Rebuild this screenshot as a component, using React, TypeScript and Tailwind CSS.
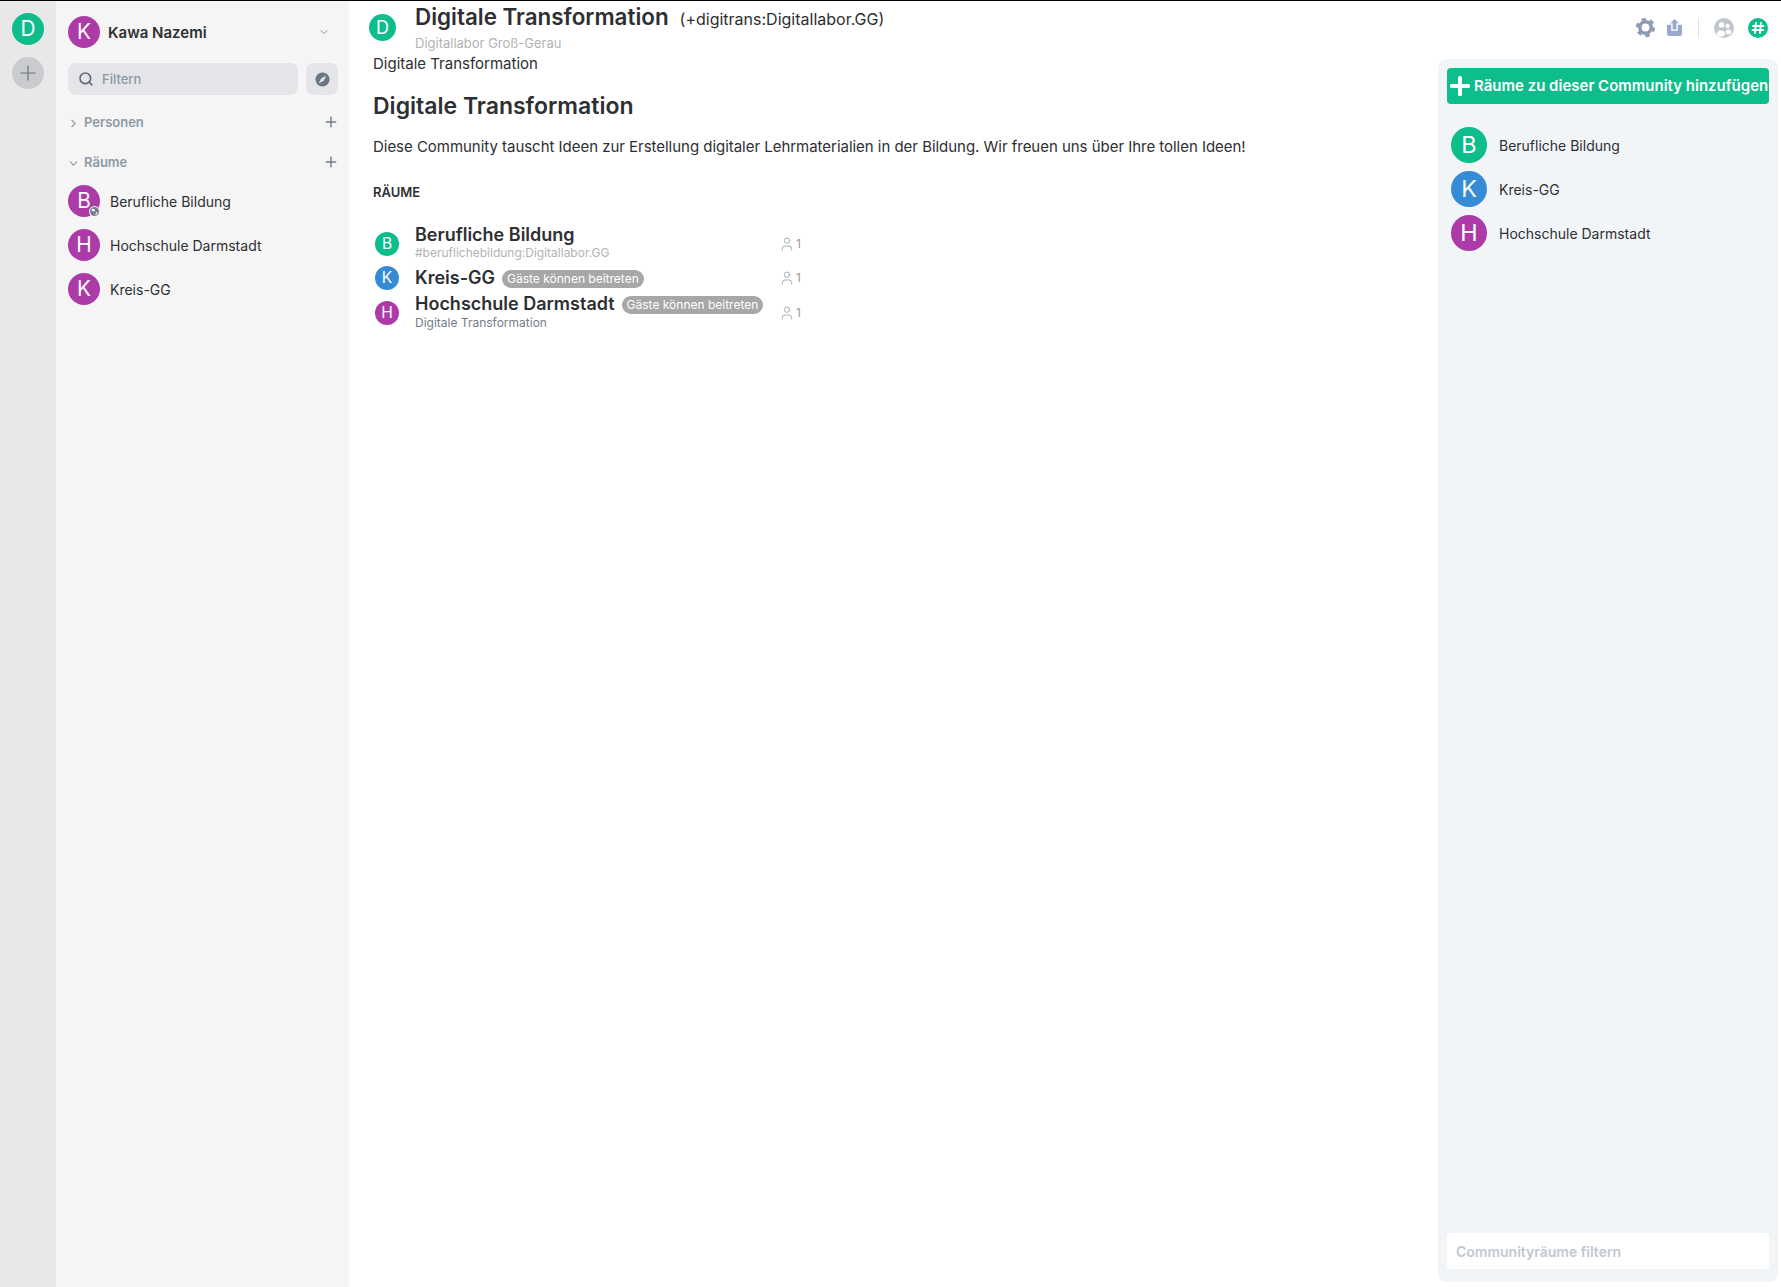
import { ChevronDown, ChevronRight, Plus, Search, User } from "lucide-react";
import { PropsWithChildren } from "react";

const GREEN = "bg-[#0dbd8b]";
const BLUE = "bg-[#368bd6]";
const PURPLE = "bg-[#ac3ba8]";

function Avatar({ letter, color, className }: { letter: string; color: string; className: string }) {
  return (
    <div className={`flex shrink-0 items-center justify-center rounded-full text-white ${color} ${className}`}>
      {letter}
    </div>
  );
}

function SectionHeader({ label, open }: { label: string; open?: boolean }) {
  return (
    <div className="flex h-5 items-center pl-[11px] pr-[10px]">
      {open ? (
        <ChevronDown size={13} strokeWidth={2} className="text-[#8d99a5]" />
      ) : (
        <ChevronRight size={13} strokeWidth={2} className="text-[#8d99a5]" />
      )}
      <span className="ml-[4px] text-[13px] font-semibold text-[#8d99a5]">{label}</span>
      <Plus size={16} strokeWidth={2.2} className="ml-auto -mt-[2px] text-[#737d8c]" />
    </div>
  );
}

function RoomRow({ letter, name, globe }: { letter: string; name: string; globe?: boolean }) {
  return (
    <div className="flex h-[32px] items-center pl-[12px]">
      <div className="relative">
        <Avatar letter={letter} color={PURPLE} className="h-8 w-8 text-[20.8px]" />
        {globe && (
          <div className="absolute bottom-0 right-0 flex h-[11px] w-[11px] items-center justify-center rounded-full bg-[#f5f5f5]">
            <svg viewBox="0 0 12 12" className="h-[9px] w-[9px]">
              <circle cx="6" cy="6" r="6" fill="#737d8c" />
              <path d="M3 2l3 1 1 2-2 1-3-1zM8 7l2 0-1 3-2 1z" fill="#f5f5f5" />
            </svg>
          </div>
        )}
      </div>
      <span className="ml-[10px] text-[14px] text-[#2e2f32]">{name}</span>
    </div>
  );
}

function LeftPanel() {
  return (
    <div className="w-[293px] shrink-0 bg-[#f5f5f5] pt-[15px]">
      <div className="flex h-8 items-center pl-[12px] pr-[19px]">
        <Avatar letter="K" color={PURPLE} className="h-8 w-8 text-[20.8px]" />
        <span className="ml-2 pt-[2px] text-[15px] font-semibold text-[#2e2f32]">Kawa Nazemi</span>
        <ChevronDown size={12} strokeWidth={2} className="ml-auto text-[#8d99a5]" />
      </div>
      <div className="mt-[15px] flex gap-2 pl-[12px] pr-[11px]">
        <div className="flex h-8 flex-1 items-center rounded-lg bg-[#e3e5e8] pl-[10px]">
          <Search size={16} strokeWidth={2.4} className="text-[#5e6976]" />
          <span className="ml-[8px] pt-[2px] text-[13px] font-medium text-[#8d99a5]">Filtern</span>
        </div>
        <div className="flex h-8 w-8 items-center justify-center rounded-lg bg-[#e3e5e8]">
          <svg viewBox="0 0 16 16" className="h-[15px] w-[15px]">
            <circle cx="8" cy="8" r="7.5" fill="#6b7788" />
            <path d="M12 4L9.300 9.300 4 12 6.700 6.700z" fill="#e3e5e8" />
          </svg>
        </div>
      </div>
      <div className="mt-[18px]">
        <SectionHeader label="Personen" />
      </div>
      <div className="mt-[20px]">
        <SectionHeader label="Räume" open />
      </div>
      <div className="mt-[12px] flex flex-col gap-3">
        <RoomRow letter="B" name="Berufliche Bildung" globe />
        <RoomRow letter="H" name="Hochschule Darmstadt" />
        <RoomRow letter="K" name="Kreis-GG" />
      </div>
    </div>
  );
}

function Badge({ children }: PropsWithChildren) {
  return (
    <span className="ml-[7px] mt-[1px] rounded-full bg-[#a7a7a7] px-[5px] py-[1px] text-[12px] leading-4 whitespace-nowrap text-white">
      {children}
    </span>
  );
}

function Members() {
  return (
    <div className="flex items-center text-[12px] text-[#9a9a9a]">
      <User size={16} strokeWidth={1.2} className="text-[#8d99a5]" />
      <span className="ml-[1px]">1</span>
    </div>
  );
}

function HierarchyRow({
  letter,
  color,
  name,
  badge,
  sub,
  subClass,
  className,
}: {
  letter: string;
  color: string;
  name: string;
  badge?: boolean;
  sub?: string;
  subClass?: string;
  className: string;
}) {
  return (
    <div className={`grid grid-cols-[42px_364px_auto] items-center ${className}`}>
      <Avatar letter={letter} color={color} className="ml-[2px] h-6 w-6 text-[15.6px]" />
      <div>
        <div className="flex items-center">
          <span className="text-[18px] font-semibold leading-[22px] whitespace-nowrap text-[#2e2f32]">{name}</span>
          {badge && <Badge>Gäste können beitreten</Badge>}
        </div>
        {sub && <div className={`text-[12px] leading-4 ${subClass}`}>{sub}</div>}
      </div>
      <Members />
    </div>
  );
}

function Main() {
  return (
    <div className="min-w-0 flex-1 pl-[24px]">
      <div className="-mt-[1px] text-[15px] leading-5 text-[#2e2f32]">Digitale Transformation</div>
      <h1 className="mt-[18px] text-[23px] font-semibold leading-[29px] text-[#2e2f32]">Digitale Transformation</h1>
      <p className="mt-[16px] text-[15px] leading-5 tracking-[-0.03px] text-[#2e2f32]">
        Diese Community tauscht Ideen zur Erstellung digitaler Lehrmaterialien in der Bildung. Wir freuen uns über Ihre
        tollen Ideen!
      </p>
      <div className="mt-[27px] text-[13px] font-semibold leading-4 text-[#2e2f32]">RÄUME</div>
      <div className="mt-[24px]">
        <HierarchyRow
          letter="B"
          color={GREEN}
          name="Berufliche Bildung"
          sub="#beruflichebildung:Digitallabor.GG"
          subClass="-mt-[1px] pb-[3px] text-[#b3b3b3]"
          className="h-[38px]"
        />
        <HierarchyRow letter="K" color={BLUE} name="Kreis-GG" badge className="mt-[3px] h-[26px]" />
        <HierarchyRow
          letter="H"
          color={PURPLE}
          name="Hochschule Darmstadt"
          badge
          sub="Digitale Transformation"
          subClass="pb-[2px] text-[#737d8c]"
          className="mt-[1px] h-[42px]"
        />
      </div>
    </div>
  );
}

function Header() {
  return (
    <div className="flex h-[54px] shrink-0">
      <div className="flex flex-1">
        <Avatar letter="D" color={GREEN} className="ml-[20px] mt-[13px] h-[27px] w-[27px] text-[18px]" />
        <div className="ml-[19px] pt-[1px]">
          <div className="flex items-baseline">
            <span className="text-[22.4px] font-semibold leading-[30px] text-[#2e2f32]">Digitale Transformation</span>
            <span className="ml-[11px] text-[16px] text-[#2e2f32]">(+digitrans:Digitallabor.GG)</span>
          </div>
          <div className="mt-[3px] text-[13px] leading-4 text-[#b3b3b3]">Digitallabor Groß-Gerau</div>
        </div>
      </div>
      <div className="flex items-center pr-[13px]">
        <svg viewBox="0 0 24 24" className="-ml-[1px] -mt-[2px] h-[21px] w-[21px]" fill="none" stroke="#8d9ab6">
          <circle cx="12" cy="12" r="6.500" strokeWidth="4" />
          <circle cx="12" cy="12" r="9.500" strokeWidth="3" strokeDasharray="5 4.950" />
        </svg>
        <svg viewBox="0 0 16 18" className="ml-[11px] -mt-[1px] h-[17px] w-[15px]" fill="#9aa8cc">
          <path d="M8 0l4.500 4.500H10V11H6V4.500H3.500zM0 7a1 1 0 011-1h3.500v6.500h7V6H15a1 1 0 011 1v9a2 2 0 01-2 2H2a2 2 0 01-2-2z" />
        </svg>
        <div className="ml-[16px] h-5 w-px bg-[#dfe3ec]" />
        <svg viewBox="0 0 20 20" className="ml-[15px] h-5 w-5">
          <circle cx="10" cy="10" r="10" fill="#c1c6cd" />
          <circle cx="7.500" cy="7" r="2.700" fill="#fff" />
          <circle cx="13.500" cy="8" r="2.200" fill="#fff" />
          <ellipse cx="7" cy="15.500" rx="4" ry="3" fill="#fff" />
          <ellipse cx="14.500" cy="14" rx="2.800" ry="2.500" fill="#fff" />
        </svg>
        <svg viewBox="0 0 20 20" className="ml-[14px] h-5 w-5">
          <circle cx="10" cy="10" r="10" fill="#0dbd8b" />
          <path d="M8 5l-1 10M13 5l-1 10M5 8h10.500M4.500 12h10.500" stroke="#fff" strokeWidth="1.900" strokeLinecap="round" />
        </svg>
      </div>
    </div>
  );
}

function SideRoom({ letter, color, name }: { letter: string; color: string; name: string }) {
  return (
    <div className="flex h-9 items-center pl-[4px]">
      <Avatar letter={letter} color={color} className="h-9 w-9 text-[23.4px]" />
      <span className="ml-3 text-[14px] text-[#2e2f32]">{name}</span>
    </div>
  );
}

function RightPanel() {
  return (
    <div className="mr-[3px] mt-[4px] mb-[5px] flex w-[340px] shrink-0 flex-col rounded-lg bg-[#f2f5f8] px-[9px] pt-[9px] pb-[13px]">
      <div className="flex h-9 items-center rounded bg-[#0dbd8b] pl-[3px] text-[15px] font-semibold whitespace-nowrap text-white">
        <svg viewBox="0 0 20 20" className="h-5 w-5" fill="#fff">
          <rect x="8" y="0" width="4" height="20" rx="1.500" />
          <rect x="0" y="8" width="20" height="4" rx="1.500" />
        </svg>
        <span className="ml-[4px]">Räume zu dieser Community hinzufügen</span>
      </div>
      <div className="mt-[23px] flex flex-col gap-2">
        <SideRoom letter="B" color={GREEN} name="Berufliche Bildung" />
        <SideRoom letter="K" color={BLUE} name="Kreis-GG" />
        <SideRoom letter="H" color={PURPLE} name="Hochschule Darmstadt" />
      </div>
      <div className="mt-auto flex h-9 items-center rounded bg-white pl-[9px] text-[14px] font-semibold text-[#c1c8d4]">
        Communityräume filtern
      </div>
    </div>
  );
}

export default function App() {
  return (
    <div className="flex h-[1287px] w-full overflow-hidden border-t border-black bg-white font-['Inter',sans-serif]">
      <div className="flex w-[56px] shrink-0 flex-col items-center gap-[12px] bg-[#e8e8e8] pt-[12px]">
        <Avatar letter="D" color={GREEN} className="h-8 w-8 text-[20.8px]" />
        <div className="flex h-8 w-8 items-center justify-center rounded-full bg-[#c9cbce]">
          <Plus size={24} strokeWidth={1.2} className="text-[#6b7280]" />
        </div>
      </div>
      <LeftPanel />
      <div className="flex min-w-0 flex-1 flex-col">
        <Header />
        <div className="flex min-h-0 flex-1">
          <Main />
          <RightPanel />
        </div>
      </div>
    </div>
  );
}
